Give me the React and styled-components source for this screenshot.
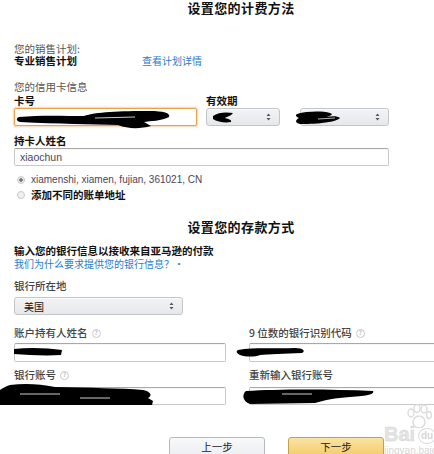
import styled, { createGlobalStyle } from 'styled-components';

const Global = createGlobalStyle`
  html, body {
    margin: 0;
    padding: 0;
    background: #fff;
    overflow: hidden;
  }
  body {
    font-family: "Liberation Sans", "Noto Sans CJK SC", sans-serif;
    color: #333;
  }
`;

const cjk = `"Noto Sans CJK SC", "Liberation Sans", sans-serif`;

function SelectArrow() {
  return (
    <svg width="5" height="8" viewBox="0 0 5 8">
      <path d="M2.5 0.5 L4.5 3 L0.5 3 Z M2.5 7.5 L4.5 5 L0.5 5 Z" fill="#555" />
    </svg>
  );
}

// redaction marks scrawled over the private fields
function Scribbles() {
  const s = { stroke: '#000', fill: 'none', strokeLinecap: 'round', strokeLinejoin: 'round' };
  return (
    <Overlay width="434" height="454" viewBox="0 0 434 454">
      {/* card number */}
      <path d="M19 117 C40 115 65 116 84 116 C95 112 120 111 150 111 C163 111 171 113 169 117 C162 121 150 121 144 122 L151 126 C140 129 128 129 118 125 C90 124 60 124 20 122 C16 121 16 118 19 117 Z" fill="#000" />
      <path d="M95 118 L135 117" stroke="#fff" strokeWidth="0.8" />
      {/* expiry month */}
      <path d="M213 116 C218 112 227 112 233 113 C231 116 226 117 225 118 C229 119 232 120 231 122 C225 123 217 122 213 119 Z" fill="#000" />
      {/* expiry year */}
      <path d="M297 114 C308 111 322 111 330 113 C334 114 331 116 326 117 C332 116 338 116 340 118 C336 122 320 124 300 124 C295 123 295 120 299 118 C296 117 295 115 297 114 Z" fill="#000" />
      <path d="M318 119 L335 118" stroke="#fff" strokeWidth="0.7" />
      {/* account holder */}
      <path d="M14 349 C30 347 48 348 62 350 L61 355 C45 356 28 355 14 354 Z" fill="#000" />
      {/* routing */}
      <path d="M238 350 C255 347 275 349 295 348 C303 348 306 351 302 353 C285 354 268 354 260 355 C255 357 246 357 240 355 C236 353 236 351 238 350 Z" fill="#000" />
      {/* bank account */}
      <path d="M10 385 C25 383 40 384 55 387 C90 388 120 388 143 390 C152 392 152 396 148 398 L153 401 L152 405 L0 405 L0 390 C3 388 6 386 10 385 Z" fill="#000" />
      <path d="M20 394 L60 394 M80 398 L110 398" stroke="#fff" strokeWidth="0.8" />
      {/* re-enter account */}
      <path d="M246 391 C280 389 330 389 373 391 C375 394 368 396 350 397 C335 398 325 400 315 403 L250 404 C242 401 242 394 246 391 Z" fill="#000" />
      <path d="M282 394 L312 394" stroke="#fff" strokeWidth="0.8" />
    </Overlay>
  );
}

function Watermark() {
  return (
    <Mark>
      <svg width="28" height="24" viewBox="0 0 28 24" style={{ position: 'absolute', left: 24, top: 0 }}>
        <g fill="none" stroke="#dcdcdc" strokeWidth="1.4">
          <ellipse cx="7" cy="9" rx="3" ry="4" />
          <ellipse cx="13" cy="4.5" rx="3" ry="4" />
          <ellipse cx="20" cy="5" rx="3" ry="4" />
          <ellipse cx="25" cy="11" rx="2.5" ry="3.5" />
          <circle cx="15" cy="18" r="6" />
        </g>
      </svg>
      <MarkBig>Bai</MarkBig>
      <MarkDu>du</MarkDu>
      <MarkSmall>jingyan.baidu</MarkSmall>
    </Mark>
  );
}

function Info() {
  return <InfoDot>?</InfoDot>;
}

export default function App() {
  return (
    <Page>
      <Global />
      <Title $top={1}>设置您的计费方法</Title>

      <Label $top={28}>您的销售计划:</Label>
      <PlanRow>
        <Strong>专业销售计划</Strong>
        <Link>查看计划详情</Link>
      </PlanRow>

      <Label $top={14}>您的信用卡信息</Label>
      <CardRow>
        <CardField>
          <Strong>卡号</Strong>
          <Input $focus $w={183} />
        </CardField>
        <div>
          <Strong>有效期</Strong>
          <SelectPair>
            <Select $w={74}><span /><SelectArrow /></Select>
            <Select $w={89}><span /><SelectArrow /></Select>
          </SelectPair>
        </div>
      </CardRow>

      <Strong $top={9}>持卡人姓名</Strong>
      <Input $w={375}>xiaochun</Input>

      <Radios>
        <RadioRow>
          <Radio $checked />
          <Address>xiamenshi, xiamen, fujian, 361021, CN</Address>
        </RadioRow>
        <RadioRow>
          <Radio />
          <Strong>添加不同的账单地址</Strong>
        </RadioRow>
      </Radios>

      <Title $top={18}>设置您的存款方式</Title>

      <Strong $top={10} $lh={13}>输入您的银行信息以接收来自亚马逊的付款</Strong>
      <Link $lh={13}>我们为什么要求提供您的银行信息？·</Link>

      <Label $top={10} $bold>银行所在地</Label>
      <Select $w={169} $top={5}><SelectText>美国</SelectText><SelectArrow /></Select>

      <BankGrid $top={12}>
        <Label $bold>账户持有人姓名 <Info /></Label>
        <Label $bold>9 位数的银行识别代码 <Info /></Label>
        <Input $w={212} $h={19} $top={4} />
        <Input $w={212} $h={19} $top={4} />
      </BankGrid>
      <BankGrid $top={7}>
        <Label $bold>银行账号 <Info /></Label>
        <Label $bold>重新输入银行账号</Label>
        <Input $w={212} $h={18} $top={6} />
        <Input $w={212} $h={18} $top={6} />
      </BankGrid>

      <Buttons>
        <Button>上一步</Button>
        <Button $primary>下一步</Button>
      </Buttons>

      <Scribbles />
      <Watermark />
    </Page>
  );
}

const Page = styled.div`
  position: relative;
  width: 434px;
  height: 454px;
  padding-left: 14px;
  box-sizing: border-box;
  overflow: hidden;
`;

const Title = styled.div`
  margin: ${({ $top }) => $top || 0}px 0 0 -14px;
  padding-left: 48px;
  width: 434px;
  box-sizing: border-box;
  text-align: center;
  font-family: ${cjk};
  font-size: 13px;
  font-weight: 700;
  line-height: 14px;
  letter-spacing: 0.4px;
  color: #111;
`;

const Label = styled.div`
  margin-top: ${({ $top }) => $top || 0}px;
  font-family: ${cjk};
  font-size: 10.5px;
  line-height: 12px;
  color: ${({ $bold }) => ($bold ? '#444' : '#555')};
  font-weight: ${({ $bold }) => ($bold ? 500 : 400)};
  display: flex;
  align-items: center;
  gap: 2px;
`;

const Strong = styled.div`
  margin-top: ${({ $top }) => $top || 0}px;
  font-family: ${cjk};
  font-size: 10.5px;
  line-height: ${({ $lh }) => $lh || 12}px;
  font-weight: 700;
  color: #111;
`;

const Link = styled.div`
  font-family: ${cjk};
  font-size: 10px;
  line-height: ${({ $lh }) => $lh || 12}px;
  color: #2a7bc8;
`;

const PlanRow = styled.div`
  display: grid;
  grid-template-columns: 128px auto;
  align-items: center;
`;

const CardRow = styled.div`
  display: flex;
  margin-top: 2px;
`;

const CardField = styled.div`
  width: 192px;
`;

const SelectPair = styled.div`
  display: flex;
  gap: 20px;
`;

const Input = styled.div`
  width: ${({ $w }) => $w}px;
  height: ${({ $h }) => $h || 18}px;
  margin-top: ${({ $top }) => ($top === undefined ? 1 : $top)}px;
  box-sizing: border-box;
  border: 1px solid ${({ $focus }) => ($focus ? '#e8a24f' : '#c8c8c8')};
  border-top-color: ${({ $focus }) => ($focus ? '#e8a24f' : '#a8a8a8')};
  box-shadow: ${({ $focus }) => ($focus ? '0 0 2px 1px rgba(228,153,70,0.45)' : 'inset 0 1px 0 rgba(0,0,0,0.04)')};
  border-radius: 2px;
  padding: 0 5px;
  font-family: "Liberation Sans", sans-serif;
  font-size: 10.5px;
  line-height: 16px;
  color: #4b4458;
  background: #fff;
`;

const Select = styled.div`
  width: ${({ $w }) => $w}px;
  height: 18px;
  margin-top: ${({ $top }) => ($top === undefined ? 1 : $top)}px;
  box-sizing: border-box;
  border: 1px solid #c2c5ca;
  border-radius: 3px;
  background: linear-gradient(#f2f3f5, #e6e8eb);
  box-shadow: 0 1px 0 rgba(255,255,255,0.6) inset;
  display: flex;
  align-items: center;
  justify-content: space-between;
  padding: 0 8px 0 9px;
`;

const SelectText = styled.span`
  font-family: ${cjk};
  font-size: 10px;
  color: #111;
`;

const Radios = styled.div`
  margin-top: 6px;
`;

const RadioRow = styled.div`
  display: flex;
  align-items: center;
  gap: 6px;
  height: 15px;
  padding-left: 3px;
`;

const Radio = styled.span`
  width: 6px;
  height: 6px;
  border-radius: 50%;
  border: 1px solid #c9c9c9;
  background: ${({ $checked }) => ($checked ? 'radial-gradient(circle, #777 0 1.5px, #eee 2px)' : '#f0f0f0')};
`;

const Address = styled.span`
  font-size: 10px;
  color: #4b4458;
`;

const BankGrid = styled.div`
  margin-top: ${({ $top }) => $top || 0}px;
  display: grid;
  grid-template-columns: 212px 212px;
  column-gap: 23px;
`;

const InfoDot = styled.span`
  display: inline-flex;
  align-items: center;
  justify-content: center;
  width: 7px;
  height: 7px;
  border-radius: 50%;
  border: 1px solid #c9c9c9;
  color: #c0c0c0;
  font-size: 6px;
  font-weight: 700;
  line-height: 1;
  margin-left: 2px;
`;

const Buttons = styled.div`
  display: flex;
  gap: 23px;
  margin-top: 32px;
  padding-left: 155px;
`;

const Button = styled.div`
  width: 96px;
  height: 26px;
  box-sizing: border-box;
  border: 1px solid ${({ $primary }) => ($primary ? '#c6a14a' : '#b6b9bf')};
  border-radius: 3px;
  background: ${({ $primary }) =>
    $primary ? 'linear-gradient(#f9e3a6, #f1c552)' : 'linear-gradient(#f8f9fa, #e8eaed)'};
  display: flex;
  justify-content: center;
  padding-top: 3px;
  font-family: ${cjk};
  font-size: 10.5px;
  line-height: 12px;
  color: #222;
`;

const Overlay = styled.svg`
  position: absolute;
  left: 0;
  top: 0;
  pointer-events: none;
`;

const Mark = styled.div`
  position: absolute;
  left: 380px;
  top: 404px;
  width: 60px;
  height: 52px;
  pointer-events: none;
`;

const MarkBig = styled.span`
  position: absolute;
  left: 4px;
  top: 20px;
  font-family: "Liberation Sans", sans-serif;
  font-size: 20px;
  font-weight: 700;
  color: rgba(220,220,220,0.75);
  -webkit-text-stroke: 0.5px rgba(200,200,200,0.7);
  line-height: 20px;
`;

const MarkDu = styled.span`
  position: absolute;
  left: 38px;
  top: 24px;
  width: 16px;
  height: 14px;
  border-radius: 50%;
  border: 1.5px solid rgba(210,210,210,0.8);
  font-family: "Liberation Sans", sans-serif;
  font-size: 10px;
  font-weight: 700;
  color: rgba(205,205,205,0.85);
  text-align: center;
  line-height: 13px;
`;

const MarkSmall = styled.span`
  position: absolute;
  left: 4px;
  top: 41px;
  font-family: "Liberation Sans", sans-serif;
  font-size: 10px;
  color: rgba(205,205,205,0.85);
  white-space: nowrap;
`;
